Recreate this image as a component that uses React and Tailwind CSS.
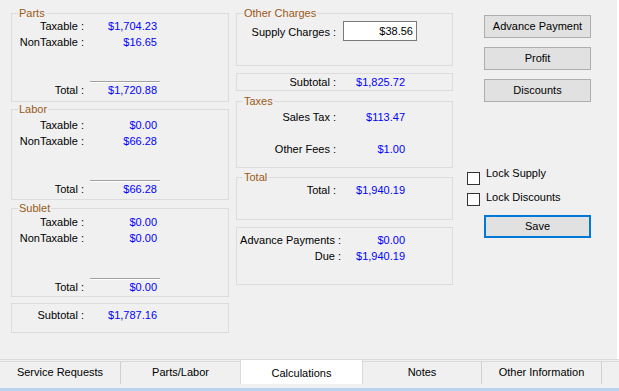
import React from "react";

// ─────────────────────────────────────────────
// Calculations tab of the repair order window.
// Three columns of group boxes (parts / labor / sublet, charges and taxes,
// action buttons) sitting above the WinForms-style tab strip.
// ─────────────────────────────────────────────

const GroupBox = ({ title, className = "", children }) => (
  <div className={`relative border border-[#dcdcdc] ${className}`}>
    {title && (
      <span className="absolute left-[6px] top-[-8px] bg-[#f0f0f0] px-px leading-[14px] text-[#9a5a17]">
        {title}
      </span>
    )}
    {children}
  </div>
);

const Row = ({ label, value, labelClass, valueClass, className = "" }) => (
  <div className={`flex leading-[16px] ${className}`}>
    <span className={`shrink-0 whitespace-nowrap text-right ${labelClass}`}>{label}</span>
    <span className={`shrink-0 whitespace-nowrap text-right text-[#0000ff] ${valueClass}`}>
      {value}
    </span>
  </div>
);

const LEFT_LABEL = "w-[72px]";
const LEFT_VALUE = "w-[73px]";
const MID_LABEL = "w-[99px]";
const MID_VALUE = "w-[69px]";

const ChargeBox = ({ title, taxable, nonTaxable, total, className }) => (
  <GroupBox title={title} className={`flex flex-col ${className}`}>
    <Row label="Taxable :" value={taxable} labelClass={LEFT_LABEL} valueClass={LEFT_VALUE} />
    <Row label="NonTaxable :" value={nonTaxable} labelClass={LEFT_LABEL} valueClass={LEFT_VALUE} />
    {/* total sits on the bottom edge, under an etched rule */}
    <div className="mt-auto">
      <div className="ml-[78px] h-px w-[70px] bg-[#a0a0a0] shadow-[0_1px_0_#ffffff]" />
      <Row label="Total :" value={total} labelClass={LEFT_LABEL} valueClass={LEFT_VALUE} />
    </div>
  </GroupBox>
);

const WinButton = ({ children, className = "" }) => (
  <button
    type="button"
    className={`ml-[17px] flex h-[23px] w-[107px] items-center justify-center bg-[#e1e1e1] leading-[13px] text-black ${className}`}
  >
    {children}
  </button>
);

const CheckRow = ({ label, className = "", boxClass = "" }) => (
  <label className={`flex items-start ${className}`}>
    <span className={`h-[13px] w-[13px] shrink-0 border border-[#333333] bg-white ${boxClass}`} />
    <span className="ml-[6px] leading-[13px]">{label}</span>
  </label>
);

const tabs = [
  { name: "Service Requests", cls: "w-[121px] border-r" },
  { name: "Parts/Labor", cls: "w-[119px]" },
  { name: "Calculations", active: true, cls: "w-[123px]" },
  { name: "Notes", cls: "w-[119px] border-r" },
  { name: "Other Information", cls: "w-[120px] border-r" },
];

export default function App() {
  return (
    <div className="h-[391px] w-full overflow-hidden bg-[#f0f0f0] font-['Liberation_Sans',Arial,sans-serif] text-[11px] text-black">
      {/* Main panel */}
      <div className="flex h-[359px] border-r-2 border-white">
        {/* Left column: parts, labor, sublet */}
        <div className="ml-[11px] flex w-[218px] flex-col pt-[13px]">
          <ChargeBox
            title="Parts"
            taxable="$1,704.23"
            nonTaxable="$16.65"
            total="$1,720.88"
            className="h-[89px] pt-[4px] pb-[3px]"
          />
          <ChargeBox
            title="Labor"
            taxable="$0.00"
            nonTaxable="$66.28"
            total="$66.28"
            className="mt-[7px] h-[91px] pt-[7px] pb-[2px]"
          />
          <ChargeBox
            title="Sublet"
            taxable="$0.00"
            nonTaxable="$0.00"
            total="$0.00"
            className="mt-[8px] h-[89px] pt-[5px] pb-[1px]"
          />
          <GroupBox className="mt-[6px] h-[30px] pt-[3px]">
            <Row label="Subtotal :" value="$1,787.16" labelClass={LEFT_LABEL} valueClass={LEFT_VALUE} />
          </GroupBox>
        </div>

        {/* Middle column: other charges, taxes, totals */}
        <div className="ml-[7px] flex w-[217px] flex-col pt-[13px]">
          <GroupBox title="Other Charges" className="h-[53px] pt-[7px]">
            <div className="flex items-center">
              <span className={`${MID_LABEL} pt-[2px] text-right leading-[16px]`}>Supply Charges :</span>
              <input
                readOnly
                value="$38.56"
                className="ml-[7px] h-[20px] w-[74px] border border-[#7a7a7a] bg-white pr-[3px] text-right text-black outline-none"
              />
            </div>
          </GroupBox>
          <GroupBox className="mt-[7px] h-[18px]">
            <Row label="Subtotal :" value="$1,825.72" labelClass={MID_LABEL} valueClass={MID_VALUE} />
          </GroupBox>
          <GroupBox title="Taxes" className="mt-[10px] h-[67px] pt-[7px]">
            <Row label="Sales Tax :" value="$113.47" labelClass={MID_LABEL} valueClass={MID_VALUE} />
            <Row
              label="Other Fees :"
              value="$1.00"
              labelClass={MID_LABEL}
              valueClass={MID_VALUE}
              className="mt-[16px]"
            />
          </GroupBox>
          <GroupBox title="Total" className="mt-[9px] h-[43px] pt-[4px]">
            <Row label="Total :" value="$1,940.19" labelClass={MID_LABEL} valueClass={MID_VALUE} />
          </GroupBox>
          <GroupBox className="mt-[7px] h-[58px] pt-[4px]">
            <Row label="Advance Payments :" value="$0.00" labelClass="w-[104px]" valueClass="w-[64px]" />
            <Row label="Due :" value="$1,940.19" labelClass="w-[104px]" valueClass="w-[64px]" />
          </GroupBox>
        </div>

        {/* Right column: actions */}
        <div className="ml-[14px] flex flex-col pt-[15px]">
          <WinButton className="border border-[#adadad]">Advance Payment</WinButton>
          <WinButton className="mt-[9px] border border-[#adadad]">Profit</WinButton>
          <WinButton className="mt-[9px] border border-[#adadad]">Discounts</WinButton>
          <CheckRow label="Lock Supply" className="mt-[65px]" boxClass="mt-[5px]" />
          <CheckRow label="Lock Discounts" className="mt-[6px]" boxClass="mt-[2px]" />
          <WinButton className="mt-[9px] border-2 border-[#0078d7]">Save</WinButton>
        </div>
      </div>

      {/* Tab strip */}
      <div className="border-t border-[#dadada]">
        <div className="flex h-[24px] items-start">
          {tabs.map((tab) =>
            tab.active ? (
              <div
                key={tab.name}
                className={`flex h-[24px] shrink-0 items-center justify-center border-x border-[#d9d9d9] bg-white pt-[2px] ${tab.cls}`}
              >
                {tab.name}
              </div>
            ) : (
              <div
                key={tab.name}
                className={`mt-px flex h-[23px] shrink-0 items-center justify-center border-t border-[#d9d9d9] border-r-[#cfcfcf] pb-[2px] ${tab.cls}`}
              >
                {tab.name}
              </div>
            )
          )}
          <div className="mt-px h-[23px] flex-1 border-t border-[#d9d9d9]" />
        </div>
        <div className="mt-[4px] h-[3px] bg-[#bcd3ed]" />
      </div>
    </div>
  );
}
